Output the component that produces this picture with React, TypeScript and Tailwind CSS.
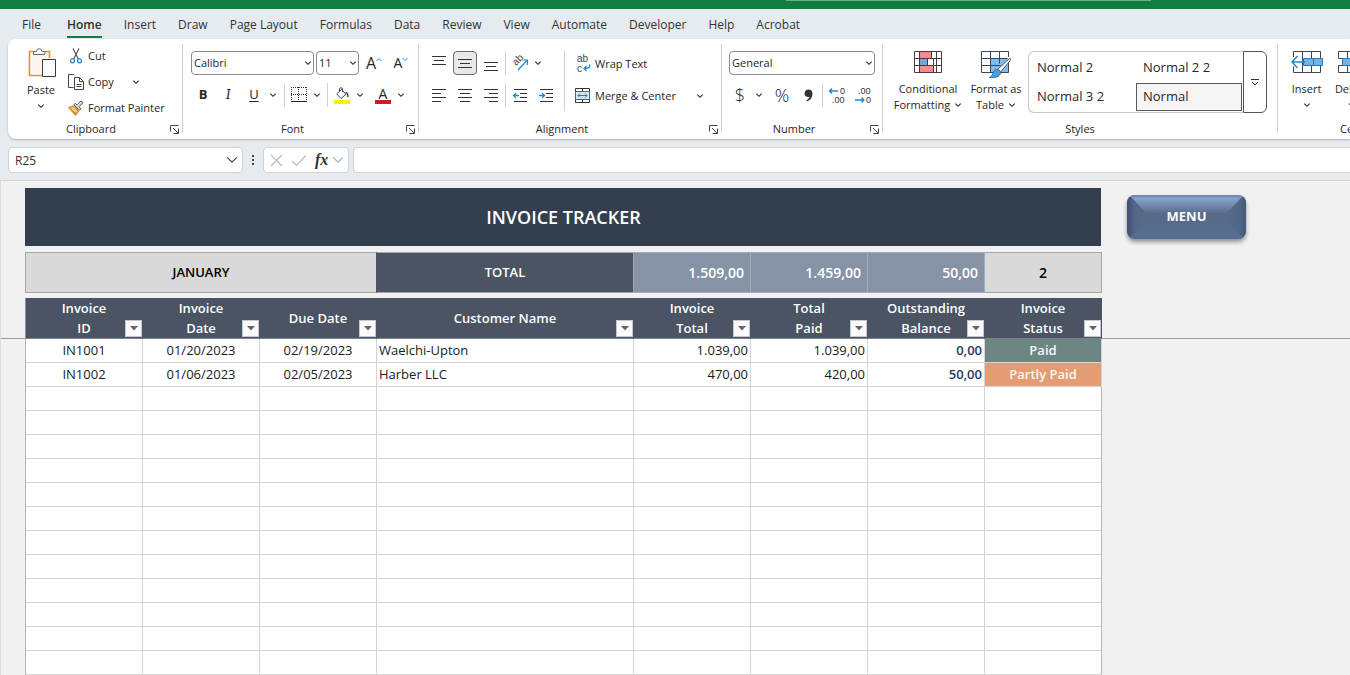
import { ReactNode } from 'react'
import clsx from 'clsx'

const tabs = [
  'File', 'Home', 'Insert', 'Draw', 'Page Layout', 'Formulas', 'Data',
  'Review', 'View', 'Automate', 'Developer', 'Help', 'Acrobat',
]

const columns = [
  { lines: ['Invoice', 'ID'], width: 'w-[117px]' },
  { lines: ['Invoice', 'Date'], width: 'w-[117px]' },
  { lines: ['Due Date'], width: 'w-[117px]' },
  { lines: ['Customer Name'], width: 'w-[257px]' },
  { lines: ['Invoice', 'Total'], width: 'w-[117px]' },
  { lines: ['Total', 'Paid'], width: 'w-[117px]' },
  { lines: ['Outstanding', 'Balance'], width: 'w-[117px]' },
  { lines: ['Invoice', 'Status'], width: 'w-[117px]' },
]

const invoices = [
  { id: 'IN1001', date: '01/20/2023', due: '02/19/2023', customer: 'Waelchi-Upton', total: '1.039,00', paid: '1.039,00', balance: '0,00', status: 'Paid' },
  { id: 'IN1002', date: '01/06/2023', due: '02/05/2023', customer: 'Harber LLC', total: '470,00', paid: '420,00', balance: '50,00', status: 'Partly Paid' },
]

const emptyRows = Array.from({ length: 12 }, (_, i) => i)

/* ---------- icons ---------- */

function Chevron({ size = 8 }: { size?: number }) {
  return (
    <svg width={size} height={size} viewBox="0 0 8 8" fill="none" stroke="currentColor" strokeWidth={size > 8 ? 0.8 : 1.1} className="shrink-0">
      <path d={size > 8 ? 'M.8 2.300 4 5.500 7.200 2.300' : 'M1.300 2.700 4 5.300 6.700 2.700'} />
    </svg>
  )
}

function PasteIcon() {
  return (
    <svg width="30" height="32" viewBox="0 0 30 32" fill="none">
      <path d="M16 28.500H3.500V4.500H8M18 4.500h5.500V11" stroke="#e8912d" strokeWidth="1.600" />
      <path d="M5.500 6.500h16V13H16v13.500H5.500z" fill="#fdf6ec" />
      <path d="M7.500 7.500v-3h3a2.700 2.700 0 0 1 5.400 0h3v3z" fill="#fff" stroke="#666" />
      <path d="M16.500 12.500h13v17h-13z" fill="#f8fafc" stroke="#3b3b3b" />
    </svg>
  )
}

function CutIcon() {
  return (
    <svg width="16" height="16" viewBox="0 0 16 16" fill="none">
      <path d="M5 .5 10.300 11M11 .5 5.700 11" stroke="#4a4a4a" strokeWidth="1.100" />
      <circle cx="4.500" cy="12.800" r="2" stroke="#2b7fbf" strokeWidth="1.200" />
      <circle cx="11.500" cy="12.800" r="2" stroke="#2b7fbf" strokeWidth="1.200" />
    </svg>
  )
}

function CopyIcon() {
  return (
    <svg width="16" height="16" viewBox="0 0 16 16" fill="none" stroke="#444">
      <path d="M5.500 13.500h-5V.5h5l1 1" />
      <path d="M6.500 3.500h5l4 4v8h-9z" fill="#fff" />
      <path d="M11.500 3.500v4h4M8.500 10.500h5M8.500 12.500h5" />
    </svg>
  )
}

function PainterIcon() {
  return (
    <svg width="16" height="16" viewBox="0 0 16 16" fill="none">
      <path d="M.8 7.500 5.500 6l5 5-3 4z" fill="#f5c87a" stroke="#d9822b" strokeWidth="1.300" />
      <path d="M2.500 9.500 8 13.500" stroke="#d9822b" />
      <path d="m6 4.800 5.500 5.500 1.500-1.600-2-2 4-4L13 .9l-4 4L7.300 3.300z" fill="#ddd" stroke="#555" />
    </svg>
  )
}

function LauncherIcon() {
  return (
    <svg width="9" height="9" viewBox="0 0 9 9" fill="none" stroke="#444">
      <path d="M.5 6.500v-6h8M3 3l5 5M8.500 3.500v5h-5" />
    </svg>
  )
}

function BordersIcon() {
  return (
    <svg width="16" height="16" viewBox="0 0 16 16" fill="none" stroke="#333">
      <path d="M.5 0v14M15.500 0v14M7.500 0v14M0 .5h16M0 7.500h16" strokeDasharray="1 1" />
      <path d="M0 14.500h16" stroke="#222" />
    </svg>
  )
}

function FillIcon() {
  return (
    <svg width="16" height="17" viewBox="0 0 16 17" fill="none">
      <path d="m7.500 2.500 4.500 4.800-5 4.200-4.200-4.600z" stroke="#444" fill="#fff" />
      <path d="M5.500 5V1.800a1.600 1.600 0 0 1 3 0V5" stroke="#444" />
      <path d="M11.500 5.500c2 .2 2.500 2 2.300 4.500" stroke="#2b579a" strokeWidth="1.600" />
      <path d="M0 13h16v4H0z" fill="#fdf500" />
    </svg>
  )
}

type Line = [number, number]

// text lines, each given as [start, end]
function LinesIcon({ lines, top = 1, gap = 4 }: { lines: Line[]; top?: number; gap?: number }) {
  return (
    <svg width="14" height="15" viewBox="0 0 14 15" stroke="#333" shapeRendering="crispEdges">
      {lines.map(([a, b], i) => (
        <path key={i} d={`M${a} ${top + i * gap + 0.5}H${b}`} />
      ))}
    </svg>
  )
}

function IndentIcon({ increase }: { increase?: boolean }) {
  return (
    <svg width="16" height="15" viewBox="0 0 16 15" fill="none">
      <path d="M2 1.500h13M8 5.500h7M8 9.500h7M2 13.500h13" stroke="#333" shapeRendering="crispEdges" />
      <path d={increase ? 'M1 7.500h5.500M4 5l2.500 2.500L4 10' : 'M7 7.500H1.500M4 5 1.500 7.500 4 10'} stroke="#2488d0" strokeWidth="1.300" />
    </svg>
  )
}

function OrientationIcon() {
  return (
    <svg width="18" height="18" viewBox="0 0 18 18" fill="none" className="overflow-visible">
      <text x="0" y="0" transform="translate(5 12) rotate(-45)" fontSize="10" fill="#444" fontFamily="Liberation Sans, sans-serif">ab</text>
      <path d="M7 16 16 6.500M11.500 6H16.500V11" stroke="#2488d0" strokeWidth="1.200" />
    </svg>
  )
}

function WrapIcon() {
  return (
    <svg width="17" height="18" viewBox="0 0 17 18" fill="none" className="overflow-visible">
      <text x="3" y="7" fontSize="10" fill="#444" fontFamily="Liberation Sans, sans-serif">ab</text>
      <text x="3" y="17" fontSize="10" fill="#444" fontFamily="Liberation Sans, sans-serif">c</text>
      <path d="M15.500 9.500c1 3-1.500 4-5.500 4M12.500 11 10 13.500l2.500 2.500" stroke="#2488d0" strokeWidth="1.300" />
    </svg>
  )
}

function MergeIcon() {
  return (
    <svg width="17" height="16" viewBox="0 0 17 16" fill="none">
      <path d="M1.500.5h14v14h-14zM8.500.5v14" stroke="#333" />
      <path d="M1.500 3.500h14v8h-14z" fill="#d6ebfa" stroke="#2d6d9e" />
      <path d="M4 7.500h9M6 5.500l-2 2 2 2M11 5.500l2 2-2 2" stroke="#1f78bd" />
    </svg>
  )
}

function DecimalIcon({ decrease }: { decrease?: boolean }) {
  return (
    <svg width="18" height="20" viewBox="0 0 18 20" fill="none" fontSize="9" fontFamily="Liberation Sans, sans-serif" className="overflow-visible">
      <text x={decrease ? 4 : 12} y="9" fill="#333">{decrease ? '.00' : '0'}</text>
      <text x={decrease ? 12 : 4} y="18" fill="#333">{decrease ? '0' : '.00'}</text>
      <path d={decrease ? 'M1 15h9M7.500 12.500 10 15l-2.500 2.500' : 'M10 6H1.500M4 3.500 1.500 6 4 8.500'} stroke="#2488d0" strokeWidth="1.300" />
    </svg>
  )
}

function ConditionalIcon() {
  return (
    <svg width="28" height="23" viewBox="0 0 28 23" fill="none">
      <path d="M5.500.5h12.500v7H5.500zM5.500 14.500h14v7h-14z" fill="#ff8a8e" />
      <path d="M5.500 7.500h8v7h-8z" fill="#6fa8dc" />
      <path d="M.5.5h27v21H.5zM.5 7.500h27M.5 14.500h27M5.500.5v21M17.500.5v7M13.500 7.500v7M19.500 7.500v14M22.500.5v21" stroke="#4a3a3a" />
    </svg>
  )
}

function FormatTableIcon() {
  return (
    <svg width="30" height="28" viewBox="0 0 30 28" fill="none">
      <path d="M9.500 7.500h18v14h-18z" fill="#7cbcf0" />
      <path d="M27.500 12v9.500H.5V.5h27V6M.5 7.500h26M.5 14.500h19M9.500.5v21M18.500.5v12" stroke="#3d4650" />
      <path d="M28.500 7.500c1.500-.5 1.500 1 .8 2L19.500 21l-3-2.500z" fill="#fff" stroke="#555" />
      <path d="M16 18.500c2.500.3 3.500 1.500 3.500 3.500-1 4-5.500 5-11 4.500 3-1.500 3-3 4-5.500.8-1.800 2-2.500 3.500-2.500z" fill="#4c9ede" stroke="#2f6fa5" />
    </svg>
  )
}

function InsertCellsIcon() {
  return (
    <svg width="32" height="23" viewBox="0 0 32 23" fill="none">
      <path d="M2.500.5h27v21h-27zM11.500.5v21M20.500.5v21" stroke="#3d4650" />
      <path d="M1 6h10v9.500H1z" fill="#fff" />
      <path d="M12.500 7.500h19v7h-19zM22.500 7.500v7" fill="#6cb4ee" stroke="#2878b8" />
      <path d="M14 11H1M6.500 5 1 11l5.500 6" stroke="#2488d0" strokeWidth="1.500" />
    </svg>
  )
}

function DeleteCellsIcon() {
  return (
    <svg width="32" height="23" viewBox="0 0 32 23" fill="none">
      <path d="M2.500.5h27v7h-27zM2.500 14.500h27v7h-27zM11.500.5v21M20.500.5v21" stroke="#3d4650" />
      <path d="M6.500 7.500h19v7h-19z" fill="#6cb4ee" stroke="#2878b8" />
      <path d="m19 8 10 10M29 8 19 18" stroke="#d13438" strokeWidth="1.500" />
    </svg>
  )
}

/* ---------- ribbon parts ---------- */

function Group({ title, launcher, className, children }: { title: string; launcher?: boolean; className: string; children: ReactNode }) {
  return (
    <section aria-label={title} className={clsx('flex h-[100px] shrink-0 flex-col', className)}>
      <div className="h-20">{children}</div>
      <div className="flex h-5 items-center">
        <span className="flex-1 text-center">{title}</span>
        {launcher && (
          <button aria-label={`${title} settings`} className="flex w-4 justify-center">
            <LauncherIcon />
          </button>
        )}
      </div>
    </section>
  )
}

function Divider({ className = 'mt-[5px] h-[89px]' }: { className?: string }) {
  return <div className={clsx('w-px shrink-0 bg-[#d0d3d6]', className)} />
}

function Tool({ label, className = 'w-6', children }: { label: string; className?: string; children: ReactNode }) {
  return (
    <button aria-label={label} className={clsx('flex h-6 shrink-0 items-center justify-center', className)}>
      {children}
    </button>
  )
}

function Dropdown({ label, value, className }: { label: string; value: string; className: string }) {
  return (
    <div className={clsx('relative h-6', className)}>
      <select aria-label={label} defaultValue={value} className="h-full w-full appearance-none rounded border border-[#8a8a8a] bg-white pl-0.5 text-[11px]">
        <option>{value}</option>
      </select>
      <span className="pointer-events-none absolute inset-y-0 right-0.5 flex items-center">
        <Chevron />
      </span>
    </div>
  )
}

function BigButton({ icon, lines, className }: { icon: ReactNode; lines: string[]; className: string }) {
  return (
    <button className={clsx('flex shrink-0 flex-col items-center leading-4', className)}>
      <span className="flex h-[30px] items-start">{icon}</span>
      <span>{lines[0]}</span>
      <span className="flex h-4 items-center gap-1">
        {lines[1]}
        <Chevron />
      </span>
    </button>
  )
}

function Ribbon() {
  return (
    <div className="ml-2 flex overflow-hidden rounded-l-lg bg-white pl-2 text-[11px] text-[#262626] shadow-[0_1px_2px_rgba(0,0,0,0.25)]">
      <Group title="Clipboard" launcher className="w-[166px]">
        <div className="flex gap-1.5 pl-1">
          <button className="flex w-[42px] flex-col items-center pt-2 leading-4">
            <PasteIcon />
            <span className="mt-[3px]">Paste</span>
            <span className="flex h-4 items-center"><Chevron /></span>
          </button>
          <div className="flex flex-col pt-1">
            <button className="flex h-[26px] items-center gap-1"><CutIcon />Cut</button>
            <div className="flex h-[26px] items-center">
              <button className="flex items-center gap-1"><CopyIcon />Copy</button>
              <button aria-label="Copy options" className="ml-[18px]"><Chevron /></button>
            </div>
            <button className="flex h-[26px] items-center gap-1 whitespace-nowrap"><PainterIcon />Format Painter</button>
          </div>
        </div>
      </Group>
      <Divider />

      <Group title="Font" launcher className="w-[235px]">
        <div className="flex flex-col gap-2 pt-3 pl-2">
          <div className="flex">
            <Dropdown label="Font family" value="Calibri" className="w-[123px]" />
            <Dropdown label="Font size" value="11" className="ml-0.5 w-[43px]" />
            <Tool label="Increase font size" className="ml-0.5 w-[26px]">
              <span className="text-base">A</span>
              <svg width="6" height="12" viewBox="0 0 6 12" fill="none" stroke="#2488d0"><path d="M.5 4 3 1.500 5.500 4" /></svg>
            </Tool>
            <Tool label="Decrease font size" className="w-[28px]">
              <span className="text-sm">A</span>
              <svg width="6" height="12" viewBox="0 0 6 12" fill="none" stroke="#2488d0"><path d="M.5 1 3 3.500 5.500 1" /></svg>
            </Tool>
          </div>
          <div className="flex">
            <Tool label="Bold"><span className="text-[13px] font-bold">B</span></Tool>
            <Tool label="Italic" className="w-[26px]"><span className="font-serif text-sm italic">I</span></Tool>
            <Tool label="Underline" className="w-[26px]"><span className="text-[13px] underline underline-offset-2">U</span></Tool>
            <Tool label="Underline options" className="w-3"><Chevron /></Tool>
            <Divider className="ml-[5px] h-6" />
            <Tool label="Borders" className="ml-0.5 w-6"><BordersIcon /></Tool>
            <Tool label="Border options" className="w-3"><Chevron /></Tool>
            <Divider className="ml-1 h-6" />
            <Tool label="Fill color" className="ml-0.5 w-6"><FillIcon /></Tool>
            <Tool label="Fill options" className="w-3"><Chevron /></Tool>
            <Tool label="Font color" className="ml-[5px] w-6">
              <span className="w-4 border-b-4 border-[#d01b22] text-sm leading-[13px]">A</span>
            </Tool>
            <Tool label="Font color options" className="w-3"><Chevron /></Tool>
          </div>
        </div>
      </Group>
      <Divider />

      <Group title="Alignment" launcher className="w-[302px]">
        <div className="flex pl-2">
          <div className="flex flex-col gap-2 pt-3">
            <div className="flex gap-0.5">
              <Tool label="Top align"><LinesIcon lines={[[0, 14], [2, 12], [0, 14]]} top={0} /></Tool>
              <Tool label="Middle align" className="w-6 rounded border border-[#6b6b6b] bg-[#e8e8e8]"><LinesIcon lines={[[0, 14], [2, 12], [0, 14]]} top={3} /></Tool>
              <Tool label="Bottom align"><LinesIcon lines={[[0, 14], [2, 12], [0, 14]]} top={6} /></Tool>
              <Divider className="h-6" />
              <Tool label="Orientation"><OrientationIcon /></Tool>
              <Tool label="Orientation options" className="w-2"><Chevron /></Tool>
            </div>
            <div className="flex gap-0.5">
              <Tool label="Align left"><LinesIcon lines={[[0, 14], [0, 9], [0, 14], [0, 9]]} /></Tool>
              <Tool label="Center"><LinesIcon lines={[[0, 14], [2, 12], [0, 14], [2, 12]]} /></Tool>
              <Tool label="Align right"><LinesIcon lines={[[0, 14], [5, 14], [0, 14], [5, 14]]} /></Tool>
              <Divider className="h-6" />
              <Tool label="Decrease indent"><IndentIcon /></Tool>
              <Tool label="Increase indent"><IndentIcon increase /></Tool>
            </div>
          </div>
          <Divider className="mt-[11px] ml-1.5 h-[61px]" />
          <div className="flex flex-col pt-[9px] pl-[9px]">
            <button className="flex h-8 items-center gap-1"><WrapIcon />Wrap Text</button>
            <div className="flex h-8 items-center">
              <button className="flex items-center gap-1 whitespace-nowrap"><MergeIcon />Merge &amp; Center</button>
              <button aria-label="Merge options" className="ml-5"><Chevron /></button>
            </div>
          </div>
        </div>
      </Group>
      <Divider />

      <Group title="Number" launcher className="w-[160px]">
        <div className="flex flex-col gap-2 pt-3 pl-[7px]">
          <Dropdown label="Number format" value="General" className="w-[146px]" />
          <div className="flex">
            <Tool label="Currency" className="w-[22px]"><span className="text-lg font-light">$</span></Tool>
            <Tool label="Currency options" className="w-4"><Chevron /></Tool>
            <Tool label="Percent" className="ml-1 w-[22px]"><span className="text-lg font-light">%</span></Tool>
            <Tool label="Comma style" className="ml-[3px] w-6">
              <svg width="9" height="13" viewBox="0 0 9 13" fill="#333"><path d="M4.500.5C7 .5 8.500 2 8.500 4.800c0 3.600-2 6.400-5.500 7.700l-.6-1.200C4.300 10.300 5.300 9 5.500 7.800 2.800 8.600.5 7 .5 4.500.5 2.200 2.200.5 4.500.5z" /></svg>
            </Tool>
            <Divider className="ml-0.5 h-6" />
            <Tool label="Increase decimal" className="ml-0.5 w-6"><DecimalIcon /></Tool>
            <Tool label="Decrease decimal" className="ml-0.5 w-6"><DecimalIcon decrease /></Tool>
          </div>
        </div>
      </Group>
      <Divider />

      <Group title="Styles" className="w-[394px]">
        <div className="flex pt-3 pl-[9px]">
          <BigButton icon={<ConditionalIcon />} lines={['Conditional', 'Formatting']} className="w-[72px]" />
          <BigButton icon={<FormatTableIcon />} lines={['Format as', 'Table']} className="w-16" />
          <div className="flex h-[62px] w-[239px] text-[13px]">
            <div className="grid flex-1 grid-cols-2 content-center rounded-l-md border border-r-0 border-[#c8c8c8]">
              <button className="h-[30px] pl-2 text-left">Normal 2</button>
              <button className="h-[30px] pl-[7px] text-left">Normal 2 2</button>
              <button className="h-7 pl-2 text-left">Normal 3 2</button>
              <button className="mr-px h-7 border border-[#5a5a5a] bg-[#f5f5f5] pl-1.5 text-left">Normal</button>
            </div>
            <button aria-label="More styles" className="flex w-6 items-center justify-center rounded-r-md border border-[#555]">
              <svg width="8" height="8" viewBox="0 0 8 8" fill="none" stroke="#333"><path d="M0 1.500h8M1 4l3 3 3-3" /></svg>
            </button>
          </div>
        </div>
      </Group>
      <Divider />

      <Group title="Cells" className="w-[148px]">
        <div className="flex pt-3 pl-1.5">
          <BigButton icon={<InsertCellsIcon />} lines={['Insert']} className="w-[45px]" />
          <BigButton icon={<DeleteCellsIcon />} lines={['Delete']} className="w-[45px]" />
        </div>
      </Group>
    </div>
  )
}

function FormulaBar() {
  return (
    <div className="flex h-[42px] items-start border-b border-[#d3d6d9] pt-2 pl-2 text-xs">
      <div className="relative h-[26px] w-[235px]">
        <input aria-label="Name box" defaultValue="R25" className="h-full w-full rounded border border-[#d0d3d6] bg-white px-1.5 text-[#333]" />
        <button aria-label="Show names" className="absolute inset-y-0 right-[5px] text-[#444]"><Chevron size={12} /></button>
      </div>
      <svg width="20" height="26" viewBox="0 0 20 26" fill="#444">
        <path d="M9 8h2v2H9zM9 12h2v2H9zM9 16h2v2H9z" />
      </svg>
      <div className="flex h-[26px] w-[86px] items-center gap-2 rounded border border-[#d0d3d6] bg-white pl-1.5">
        <button aria-label="Cancel">
          <svg width="13" height="13" viewBox="0 0 13 13" stroke="#bbb" strokeWidth="1.200"><path d="m1 1 11 11M12 1 1 12" /></svg>
        </button>
        <button aria-label="Enter">
          <svg width="16" height="13" viewBox="0 0 16 13" fill="none" stroke="#bbb" strokeWidth="1.200"><path d="m1 7 4.500 4.500L15 1.500" /></svg>
        </button>
        <button aria-label="Insert function" className="flex items-center">
          <span className="font-[Liberation_Serif,serif] text-base leading-5 font-bold text-[#333] italic">fx</span>
          <span className="ml-1 text-[#aaa]"><Chevron size={12} /></span>
        </button>
      </div>
      <input aria-label="Formula" className="ml-1 h-[26px] min-w-0 flex-1 rounded-l border border-r-0 border-[#d0d3d6] bg-white px-2" />
    </div>
  )
}

/* ---------- sheet ---------- */

function FilterButton({ column }: { column: string }) {
  return (
    <button aria-label={`Filter ${column}`} className="absolute right-0 bottom-px flex h-[17px] w-[17px] items-center justify-center border border-[#c3c8d0] bg-[#fbfbfc]">
      <svg width="8" height="5" viewBox="0 0 8 5" fill="#666"><path d="M0 0h8L4 4.500z" /></svg>
    </button>
  )
}

function MenuButton() {
  return (
    <button className="relative block h-11 w-[119px] overflow-hidden rounded-lg bg-[#576b89] text-[13px] font-bold text-white shadow-[0_3px_4px_rgba(0,0,0,0.4)]">
      <svg className="absolute inset-0 h-full w-full" viewBox="0 0 119 44" preserveAspectRatio="none">
        <defs>
          <linearGradient id="menu-top" x1="0" y1="0" x2="0" y2="1">
            <stop offset="0" stopColor="#6483b3" />
            <stop offset="0.2" stopColor="#86a1cb" />
            <stop offset="1" stopColor="#5a6e8d" />
          </linearGradient>
          <linearGradient id="menu-left" x1="0" y1="0" x2="1" y2="0">
            <stop offset="0" stopColor="#3f5070" />
            <stop offset="0.4" stopColor="#53678a" />
            <stop offset="1" stopColor="#576b89" />
          </linearGradient>
          <linearGradient id="menu-right" x1="1" y1="0" x2="0" y2="0">
            <stop offset="0" stopColor="#465877" />
            <stop offset="0.3" stopColor="#506485" />
            <stop offset="1" stopColor="#576b89" />
          </linearGradient>
          <linearGradient id="menu-bottom" x1="0" y1="1" x2="0" y2="0">
            <stop offset="0" stopColor="#566d94" />
            <stop offset="1" stopColor="#576b89" />
          </linearGradient>
        </defs>
        <path d="M2 0h115l-17 18H19z" fill="url(#menu-top)" />
        <path d="M0 0h2l17 18v8L2 44H0z" fill="url(#menu-left)" />
        <path d="M119 0h-2l-17 18v8l17 18h2z" fill="url(#menu-right)" />
        <path d="M2 44l17-18h81l17 18z" fill="url(#menu-bottom)" />
      </svg>
      <span className="relative">MENU</span>
    </button>
  )
}

function Sheet() {
  return (
    <main className="flex-1 border-l border-[#dcdcdc] bg-[#f1f1f1] text-[13px] text-[#1a1a1a]">
      <table className="w-full table-fixed border-separate border-spacing-0">
        <colgroup>
          <col className="w-[25px]" />
          {columns.map((col, i) => (
            <col key={i} className={col.width} />
          ))}
          <col />
        </colgroup>
        <thead className="[&_th]:font-semibold">
          <tr className="h-[7px]"><td colSpan={10} /></tr>
          <tr className="h-[58px]">
            <td className="border-r border-[#333f4e]" />
            <th colSpan={8} className="border-r border-r-[#f1f1f1] bg-[#333f4e] text-lg text-white">INVOICE TRACKER</th>
            <td className="pl-[25px]"><MenuButton /></td>
          </tr>
          <tr className="h-1.5"><td colSpan={10} /></tr>
          <tr className="h-[41px] text-white">
            <td className="border-r border-[#a3a6ab]" />
            <th colSpan={3} className="border-y border-r border-[#a3a6ab] border-r-[#4a5463] bg-[#d9d9d9] text-black">JANUARY</th>
            <th className="border-y border-r border-[#a3a6ab] bg-[#4a5463]">TOTAL</th>
            <th className="border-y border-r border-[#a3acb9] bg-[#8693a6] pr-1.5 text-right text-sm">1.509,00</th>
            <th className="border-y border-r border-[#a3acb9] bg-[#8693a6] pr-1.5 text-right text-sm">1.459,00</th>
            <th className="border-y border-r border-[#a3acb9] bg-[#8693a6] pr-1.5 text-right text-sm">50,00</th>
            <th className="border-y border-r border-[#a3a6ab] bg-[#d9d9d9] text-sm text-black">2</th>
            <td />
          </tr>
          <tr className="h-[5px]"><td colSpan={10} /></tr>
          <tr className="h-[41px] text-white">
            <td className="border-r border-b border-r-[#8e949d] border-b-[#9a9a9a]" />
            {columns.map((col, i) => (
              <th key={i} className="relative border-r border-b border-[#4a5463] border-b-[#7d838c] bg-[#4a5463] p-0 leading-5">
                {col.lines.map((line) => (
                  <span key={line} className="block">{line}</span>
                ))}
                <FilterButton column={col.lines.join(' ')} />
              </th>
            ))}
            <td className="border-b border-[#9a9a9a]" />
          </tr>
        </thead>
        <tbody>
          {invoices.map((inv) => (
            <tr key={inv.id} className="h-6 text-center">
              <td className="border-r border-[#b5b5b5] p-0" />
              <td className="border-r border-b border-[#d4d4d4] bg-white p-0">{inv.id}</td>
              <td className="border-r border-b border-[#d4d4d4] bg-white p-0">{inv.date}</td>
              <td className="border-r border-b border-[#d4d4d4] bg-white p-0">{inv.due}</td>
              <td className="border-r border-b border-[#d4d4d4] bg-white p-0 pl-0.5 text-left">{inv.customer}</td>
              <td className="border-r border-b border-[#d4d4d4] bg-white p-0 pr-0.5 text-right">{inv.total}</td>
              <td className="border-r border-b border-[#d4d4d4] bg-white p-0 pr-0.5 text-right">{inv.paid}</td>
              <td className="border-r border-b border-[#d4d4d4] bg-white p-0 pr-0.5 text-right font-semibold text-[#243a63]">{inv.balance}</td>
              <td className={clsx('border-r border-b border-[#d4d4d4] p-0 font-semibold text-[#f7f7f7]', inv.status === 'Paid' ? 'bg-[#6b8683]' : 'bg-[#e39c74]')}>{inv.status}</td>
              <td />
            </tr>
          ))}
          {emptyRows.map((row) => (
            <tr key={row} className="h-6">
              <td className="border-r border-[#b5b5b5] p-0" />
              {columns.map((_, i) => (
                <td key={i} className={clsx('border-r border-b border-[#d4d4d4] bg-white p-0', i === 7 && 'border-r-[#b5b5b5]')} />
              ))}
              <td />
            </tr>
          ))}
        </tbody>
      </table>
    </main>
  )
}

export default function App() {
  return (
    <div className="flex min-h-screen flex-col overflow-x-hidden bg-[#e6ebef] font-[Open_Sans,Noto_Sans,sans-serif]">
      <header className="flex h-[9px] bg-[#107c41]">
        <div className="mr-[199px] ml-auto h-px w-[365px] bg-[#6fae8b]" />
      </header>
      <nav className="flex h-[30px] items-center pl-[11px] text-xs text-[#333]">
        {tabs.map((tab) => (
          <button key={tab} className={clsx('shrink-0 px-[11px]', tab === 'File' && 'mr-1', tab === 'Home' && 'font-semibold')}>
            <span className={clsx('block border-b-2 pt-1 leading-[22px]', tab === 'Home' ? 'border-[#107c41]' : 'border-transparent')}>{tab}</span>
          </button>
        ))}
      </nav>
      <Ribbon />
      <FormulaBar />
      <Sheet />
    </div>
  )
}
